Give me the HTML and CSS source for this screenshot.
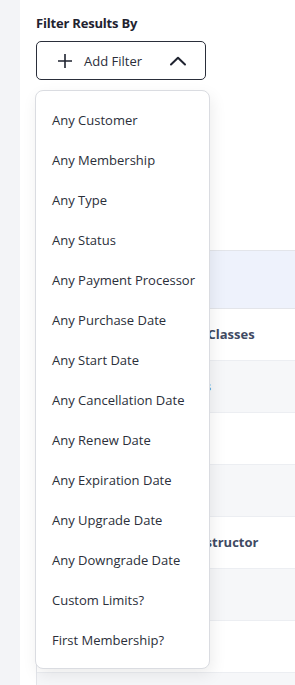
FILE: index.html
```html
<!DOCTYPE html>
<html lang="en">
<head>
  <meta charset="UTF-8">
  <meta name="viewport" content="width=device-width, initial-scale=1.0">
  <title>Memberships</title>
  <link rel="stylesheet" href="styles.css">
</head>
<body>
  <div class="sidebar"></div>
  <div class="main">
    <div class="filters">
      <h3>Filter Results By</h3>
      <button class="add-filter">
        <svg class="plus" width="16" height="16" viewBox="0 0 16 16"><path d="M8 1v14M1 8h14" stroke="#1f2330" stroke-width="1.6" fill="none"/></svg>
        <span>Add Filter</span>
        <svg class="chevron" width="18" height="10" viewBox="0 0 18 10"><path d="M2 8.5L9 1.8l7 6.7" stroke="#1f2330" stroke-width="2" fill="none" stroke-linecap="round" stroke-linejoin="round"/></svg>
      </button>
      <ul class="menu">
        <li>Any Customer</li>
        <li>Any Membership</li>
        <li>Any Type</li>
        <li>Any Status</li>
        <li>Any Payment Processor</li>
        <li>Any Purchase Date</li>
        <li>Any Start Date</li>
        <li>Any Cancellation Date</li>
        <li>Any Renew Date</li>
        <li>Any Expiration Date</li>
        <li>Any Upgrade Date</li>
        <li>Any Downgrade Date</li>
        <li>Custom Limits?</li>
        <li>First Membership?</li>
      </ul>
    </div>

    <div class="table">
      <div class="thead"></div>
      <div class="row">Unlimited Boxing Classes</div>
      <div class="row alt">Kids Memberships</div>
      <div class="row"></div>
      <div class="row alt"></div>
      <div class="row">Private Trainer Instructor</div>
      <div class="row alt"></div>
      <div class="row"></div>
      <div class="row alt"></div>
    </div>
  </div>
</body>
</html>
```

FILE: styles.css
```css
body {
  margin: 0;
  font-family: 'Open Sans', sans-serif;
  display: flex;
  height: 685px;
  overflow: hidden;
  background: #fff;
}

.sidebar {
  width: 20px;
  flex-shrink: 0;
  background: #f3f4f7;
}

.main {
  flex: 1;
  padding: 14px 0 0 16px;
  overflow: hidden;
}

.filters {
  position: relative;
  height: 236px;
}

.filters h3 {
  margin: 0 0 9px 0;
  font-size: 13px;
  font-weight: 700;
  color: #1f2330;
  letter-spacing: -0.2px;
}

.add-filter {
  width: 170px;
  height: 39px;
  display: flex;
  align-items: center;
  padding: 0 0 0 20px;
  border: 1px solid #2a2e3a;
  border-radius: 5px;
  background: #fff;
  font-family: 'Open Sans', sans-serif;
  font-size: 13px;
  color: #2a2e3a;
  cursor: pointer;
}

.add-filter span {
  margin-left: 11px;
}

.add-filter .chevron {
  margin-left: auto;
  margin-right: 18px;
}

.menu {
  position: absolute;
  top: 76px;
  left: -1px;
  width: 173px;
  margin: 0;
  padding: 9px 0 8px 0;
  list-style: none;
  background: #fff;
  border: 1px solid #dadce1;
  border-radius: 8px;
  box-shadow: 2px 6px 16px rgba(0, 0, 0, 0.08);
  z-index: 2;
}

.menu li {
  height: 40px;
  line-height: 40px;
  padding-left: 16px;
  font-size: 13px;
  color: #2b2f3a;
}

.table {
  width: 420px;
  border-top: 1px solid #e3e5ea;
  border-left: 1px solid #e3e5ea;
}

.thead {
  height: 57px;
  background: #eef2fc;
  border-bottom: 1px solid #e3e5ea;
}

.row {
  height: 51px;
  line-height: 51px;
  padding-left: 55px;
  border-bottom: 1px solid #eceef2;
  font-size: 13px;
  font-weight: 700;
  color: #3f4a63;
  white-space: nowrap;
}

.row.alt {
  background: #f6f7f9;
}
```
